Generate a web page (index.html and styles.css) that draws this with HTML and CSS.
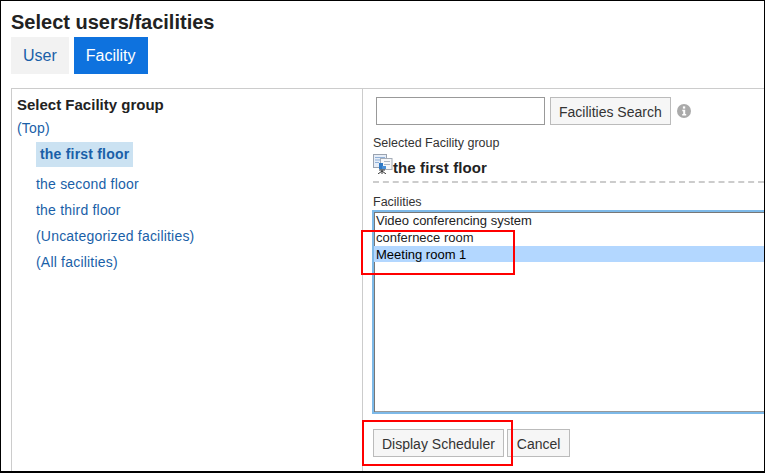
FILE: index.html
```html
<!DOCTYPE html>
<html lang="en">
<head>
    <meta charset="UTF-8">
    <meta name="viewport" content="width=device-width, initial-scale=1.0">
    <title>Select users/facilities</title>
    <link rel="stylesheet" href="styles.css">
</head>
<body>
    <div class="frame">
        <h1>Select users/facilities</h1>
        <div class="tabs">
            <a class="tab" href="#">User</a>
            <a class="tab tab-active" href="#">Facility</a>
        </div>
        <div class="panel">
            <div class="groups">
                <h2>Select Facility group</h2>
                <a class="top-link" href="#">(Top)</a>
                <ul class="group-list">
                    <li class="group-current"><a href="#">the first floor</a></li>
                    <li><a href="#">the second floor</a></li>
                    <li><a href="#">the third floor</a></li>
                    <li><a href="#">(Uncategorized facilities)</a></li>
                    <li><a href="#">(All facilities)</a></li>
                </ul>
            </div>
            <div class="picker">
                <div class="search">
                    <input class="search-input" type="text">
                    <button class="btn" type="button">Facilities Search</button>
                    <svg class="info" width="14" height="14" viewBox="0 0 14 14">
                        <circle cx="7" cy="7" r="7" fill="#aaa"/>
                        <rect x="5.9" y="2.4" width="2.3" height="2.2" fill="#fff"/>
                        <path d="M5.3 5.8h2.9v4.3h1v1.4H5.2v-1.4h1V7.2h-.9z" fill="#fff"/>
                    </svg>
                </div>
                <div class="selected-label">Selected Facility group</div>
                <div class="selected-name">
                    <svg class="facility-icon" width="20" height="20" viewBox="0 0 20 20">
                        <rect x="0.5" y="0.5" width="13" height="13" fill="#e6edf7" stroke="#9aa3b0"/>
                        <path d="M2 3.500h10M2 6h10M2 8.500h4" stroke="#8fb0d8"/>
                        <rect x="7.500" y="4.500" width="11.500" height="11" fill="#f6f7f9" stroke="#a5adb8"/>
                        <path d="M11 7.500h6M11 10.500h6" stroke="#b0b8c4"/>
                        <rect x="6" y="9" width="4" height="6" fill="#2f78c4"/>
                        <path d="M9 12h4v3H9z" fill="#4a8fd6"/>
                        <path d="M9 16v4M5 20l4-3 4 3M6 16h6" stroke="#333" fill="none"/>
                    </svg>
                    <span>the first floor</span>
                </div>
                <div class="facilities-label">Facilities</div>
                <div class="facility-list">
                    <div>Video conferencing system</div>
                    <div>confernece room</div>
                    <div class="facility-selected">Meeting room 1</div>
                </div>
                <div class="actions">
                    <button class="btn" type="button">Display Scheduler</button>
                    <button class="btn btn-cancel" type="button">Cancel</button>
                </div>
            </div>
        </div>
        <div class="callout callout-list"></div>
        <div class="callout callout-button"></div>
    </div>
</body>
</html>
```

FILE: styles.css
```css
* {
    margin: 0;
    padding: 0;
    box-sizing: border-box;
}

html, body {
    height: 100%;
    overflow: hidden;
}

body {
    background-color: #fff;
    color: #333;
    font-family: 'Liberation Sans', Arial, sans-serif;
    font-size: 13px;
}

.frame {
    position: relative;
    height: 473px;
    border: 1px solid #000;
    border-width: 1px 1px 2px 1px;
    padding: 11px 0 0 10px;
    overflow: hidden;
}

h1 {
    font-size: 20px;
    line-height: 21px;
    font-weight: bold;
    color: #222;
}

.tabs {
    display: flex;
    gap: 5px;
    margin-top: 4px;
}

.tab {
    display: block;
    height: 37px;
    line-height: 37px;
    padding: 0 12px;
    font-size: 16px;
    color: #1a5fa8;
    background-color: #f2f2f2;
    text-decoration: none;
}

.tab-active {
    color: #fff;
    background-color: #0e72de;
}

.panel {
    display: flex;
    height: 400px;
    margin-top: 14px;
    border: 1px solid #ccc;
    border-width: 1px 0 0 1px;
}

.groups {
    width: 351px;
    flex-shrink: 0;
    padding: 7px 0 0 5px;
    border-right: 1px solid #ccc;
}

.groups a {
    color: #1a5fa8;
    text-decoration: none;
}

h2 {
    font-size: 15px;
    line-height: 17px;
    font-weight: bold;
    color: #222;
}

.top-link {
    display: block;
    margin-top: 7px;
    font-size: 14px;
    line-height: 16px;
    letter-spacing: 0.2px;
}

.group-list {
    list-style: none;
    margin: 6px 0 0 19px;
    font-size: 14px;
    letter-spacing: 0.2px;
}

.group-list li {
    height: 26px;
    line-height: 26px;
}

.group-list .group-current {
    display: table;
    height: 25px;
    line-height: 25px;
    padding: 0 4px;
    margin-bottom: 4px;
    background-color: #cbe2f2;
    font-weight: bold;
}

.picker {
    flex: 1;
    min-width: 0;
    padding: 8px 0 0 10px;
}

.search {
    display: flex;
    align-items: center;
    padding-left: 3px;
}

.search-input {
    width: 169px;
    height: 28px;
    border: 1px solid #999;
    background-color: #fff;
}

.btn {
    height: 28px;
    padding: 1px 8px 0;
    font-family: inherit;
    font-size: 14px;
    color: #333;
    background-color: #f6f6f6;
    border: 1px solid #bbb;
}

.search .btn {
    margin-left: 5px;
}

.info {
    margin-left: 6px;
}

.selected-label {
    margin-top: 11px;
    font-size: 12.500px;
    line-height: 15px;
}

.selected-name {
    display: flex;
    align-items: flex-end;
    height: 27px;
    font-size: 15px;
    font-weight: bold;
    color: #222;
}

.selected-name span {
    line-height: 20px;
    letter-spacing: 0.1px;
}

.facility-icon {
    flex-shrink: 0;
    align-self: flex-start;
    margin-top: 3px;
}

.facilities-label {
    margin-top: 3px;
    padding-top: 12px;
    border-top: 2px dashed #ccc;
    font-size: 12.500px;
    line-height: 15px;
}

.facility-list {
    height: 204px;
    margin: 0 0 0 -1px;
    padding: 0 0 0 2px;
    border: 2px solid #7db9e8;
    border-right: 0;
    box-shadow: inset 1px 1px 0 #777, inset 0 -1px 0 #999;
    font-size: 13px;
    line-height: 17px;
    color: #222;
}

.facility-selected {
    margin-left: -2px;
    padding-left: 2px;
    height: 16px;
    line-height: 18px;
    background-color: #b3d7ff;
    color: #000;
}

.actions {
    display: flex;
    gap: 3px;
    margin-top: 15px;
}

.btn-cancel {
    padding: 1px 9px 0;
}

.callout {
    position: absolute;
    border: 2px solid #f00;
}

.callout-list {
    left: 360px;
    top: 229px;
    width: 154px;
    height: 45px;
}

.callout-button {
    left: 361px;
    top: 419px;
    width: 151px;
    height: 46px;
}
```
